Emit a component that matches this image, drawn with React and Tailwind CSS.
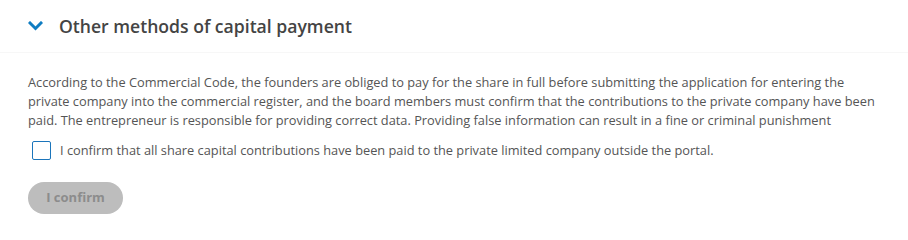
import { useState } from 'react'

const ChevronDown = () => (
  <svg width="15" height="10" viewBox="0 0 15 10" className="shrink-0">
    <path d="M2 2 L7.5 7.5 L13 2" fill="none" stroke="#0f7dc2" strokeWidth="3" strokeLinecap="square" />
  </svg>
)

export default function App() {
  const [checked, setChecked] = useState(false)

  return (
    <div className="w-[908px] h-[226px] bg-white text-[#4d4d4d]" style={{ fontFamily: '"Open Sans", sans-serif' }}>
      {/* accordion header */}
      <div className="h-[53px] flex items-center gap-[16px] pl-[28px] border-b border-[#f7f7f7]">
        <ChevronDown />
        <h2 className="text-[17.6px] font-semibold text-[#444]">Other methods of capital payment</h2>
      </div>

      <div className="pl-[28px] pr-[20px] pt-[20px]">
        <p className="text-[12.8px] leading-[19px] text-[#555]">
          According to the Commercial Code, the founders are obliged to pay for the share in full before submitting the application for entering the private company into the commercial register, and the board members must confirm that the contributions to the private company have been paid. The entrepreneur is responsible for providing correct data. Providing false information can result in a fine or criminal punishment
        </p>

        <label className="flex items-center gap-[9px] mt-[11px] pl-[4px] cursor-pointer">
          <button
            onClick={() => setChecked(c => !c)}
            className="w-[19px] h-[19px] border border-[#1b75bb] rounded-[2px] bg-white flex items-center justify-center"
          >
            {checked && <span className="w-[9px] h-[9px] bg-[#1b75bb]" />}
          </button>
          <span className="text-[12.8px] text-[#555]">I confirm that all share capital contributions have been paid to the private limited company outside the portal.</span>
        </label>

        <button
          disabled={!checked}
          className="mt-[22px] w-[95px] h-[32px] rounded-full bg-[#bdbdbd] text-[#8c8c8c] text-[13px] font-bold"
        >
          I confirm
        </button>
      </div>
    </div>
  )
}
